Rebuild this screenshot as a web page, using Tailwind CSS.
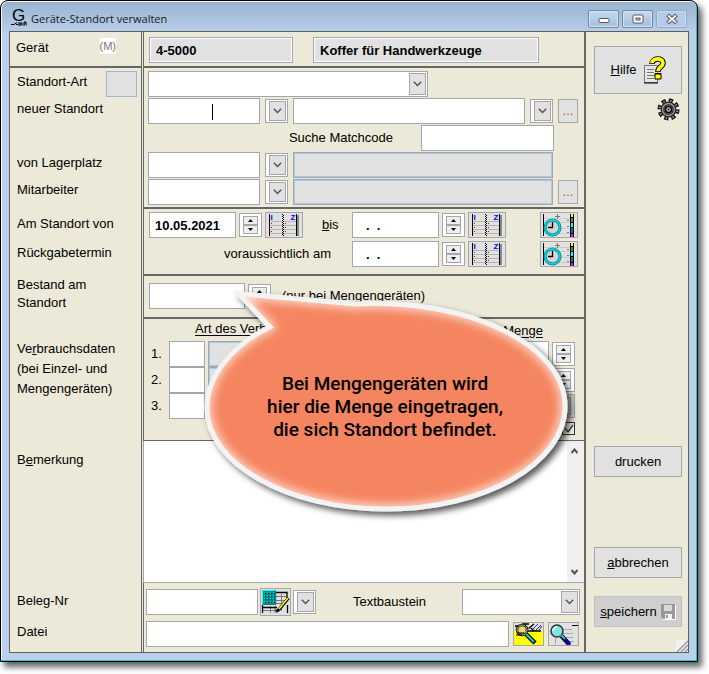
<!DOCTYPE html>
<html lang="de">
<head>
    <meta charset="UTF-8">
    <meta name="viewport" content="width=device-width, initial-scale=1.0">
    <title>Geräte-Standort verwalten</title>
    <script src="https://cdn.jsdelivr.net/npm/@tailwindcss/browser@4"></script>
</head>
<body class="bg-white pr-[11px] pb-3 font-['Liberation_Sans',sans-serif] text-[13px] leading-5 text-black">

    <!-- shared icons -->
    <svg class="hidden" aria-hidden="true">
        <symbol id="chevron" viewBox="0 0 9 6"><path d="M.8.8 4.5 4.5 8.2.8" fill="none" stroke="#555" stroke-width="1.5"/></symbol>
        <symbol id="up" viewBox="0 0 5 3"><path d="M0 3 2.5 0 5 3z"/></symbol>
        <symbol id="down" viewBox="0 0 5 3"><path d="M0 0 2.5 3 5 0z"/></symbol>
        <symbol id="calendar" viewBox="0 0 36 24">
            <path d="M4 8.5h26M4 12.5h26M4 16.5h26M4 20.5h26" stroke="#b4b4b4"/>
            <path d="M3.5 1v22M30.5 1v22" stroke="#000"/>
            <path d="M32 2v21" stroke="#8a8a8a" stroke-width="2"/>
            <path d="M16.5 1v22" stroke="#000" stroke-dasharray="1 1"/>
            <path d="M17.5 2v21" stroke="#000" stroke-dasharray="1 1"/>
            <path d="M5.5 10v1M5.5 14v1M5.5 18v1M19.5 10v1M19.5 14v1M19.5 18v1" stroke="#d00"/>
            <text x="4.500" y="7" font-size="8" font-weight="bold" fill="#00f">I</text>
            <text x="24.500" y="7" font-size="8" font-weight="bold" fill="#00f">Z</text>
        </symbol>
        <symbol id="clock" viewBox="0 0 36 24">
            <path d="M3 5.500h26M3 9.500h26M3 15.500h26M3 20.500h26" stroke="#ccc"/>
            <path d="M2.500 1v22" stroke="#000"/>
            <path d="M16.500 1v5M14 3.500h5M26 7.500h2M26 13.500h2M26 19.500h2" stroke="#777"/>
            <circle cx="11.500" cy="14.500" r="7.500" fill="#d4d4d4" stroke="#087a80" stroke-width="3"/>
            <circle cx="11.500" cy="14.500" r="7.500" fill="none" stroke="#00e5ee" stroke-width="1.400"/>
            <path d="M11.500 9v5.500H7" fill="none" stroke="#000" stroke-width="1.300"/>
            <path d="M29 1h4v23h-4z"/>
            <path d="M30 1h2v3h-2z" fill="#ff0"/><path d="M30 5h2v4h-2z" fill="#808000"/>
            <path d="M30 10h2v4h-2z" fill="#0ff"/><path d="M30 15h2v5h-2z" fill="#008080"/>
            <path d="M30 21h2v3h-2z" fill="#f0f"/>
        </symbol>
    </svg>

    <div class="relative rounded-t-lg border border-black bg-[#b9d1ea] pr-2 pb-2 pl-2 shadow-[inset_-1px_-1px_0_#1fc4e0,inset_1px_1px_0_#f4f8fc,4px_5px_6px_#000000a0]">

        <!-- title bar -->
        <header class="-mx-[7px] mt-px flex h-[29px] items-center rounded-t-md bg-linear-to-b from-[#9ab3d1] to-[#b6cee8] pr-[9px] pl-2">
            <svg class="h-5 w-[18px]" viewBox="0 0 18 20">
                <text x="2" y="14" font-size="17" font-family="Liberation Sans">G</text>
                <path d="M1 17.500h3l3-2M6 17.500h2M9 15v4M11 15v4M9 17h4M14 19v-4h2v2h-2M16 18h1" fill="none" stroke="#000"/>
            </svg>
            <h1 class="flex-1 pt-[5px] pl-[3px] font-['Open_Sans',sans-serif] text-[11px] text-[#1a1a1a]">Geräte-Standort verwalten</h1>
            <div class="mt-1 flex gap-[3px]">
                <button aria-label="Minimieren" class="grid h-[18px] w-[31px] place-items-center rounded-xs border border-[#6d88a6] bg-linear-to-b from-[#c7daee] to-[#a3bfdd] shadow-[inset_0_0_0_1px_#d5e4f3]">
                    <svg class="h-3 w-3" viewBox="0 0 12 12"><rect x="1" y="5.500" width="10" height="4" rx="1" fill="#fff" stroke="#555b66"/></svg>
                </button>
                <button aria-label="Maximieren" class="grid h-[18px] w-[31px] place-items-center rounded-xs border border-[#6d88a6] bg-linear-to-b from-[#c7daee] to-[#a3bfdd] shadow-[inset_0_0_0_1px_#d5e4f3]">
                    <svg class="h-3 w-3" viewBox="0 0 12 12"><rect x="1" y="2" width="10" height="8" rx="1" fill="#fff" stroke="#555b66"/><rect x="4" y="5" width="4" height="2" fill="#b9d1ea" stroke="#555b66"/></svg>
                </button>
                <button aria-label="Schließen" class="grid h-[18px] w-[31px] place-items-center rounded-xs border border-[#93abc6] bg-[#b5cce6] shadow-[inset_0_0_0_1px_#c9dbee]">
                    <svg class="h-3 w-3" viewBox="0 0 12 12"><path d="m1.500 2 9 8M10.500 2l-9 8" stroke="#555b66" stroke-width="4"/><path d="m2 2.500 8 7M10 2.500l-8 7" stroke="#f4f4f4" stroke-width="1.800"/></svg>
                </button>
            </div>
        </header>

        <main class="flex border border-l-0 border-[#5f5f5f] bg-[#ece9d8]">
            <form class="min-w-0 flex-1">

                <section class="flex gap-px">
                    <div class="flex w-[133px] justify-between border-x border-b-2 border-[#666] pt-[6px] pr-[25px] pl-[6px]">
                        <label for="geraet">Gerät</label>
                        <span class="h-4 bg-white text-[11px] leading-4 text-[#777]">(M)</span>
                    </div>
                    <div class="flex flex-1 gap-5 border-b-2 border-l border-[#666] pt-[5px] pr-[45px] pb-[3px] pl-[5px]">
                        <input id="geraet" value="4-5000" readonly class="h-[26px] w-36 border border-[#a5a5ac] bg-[#e1e1e1] px-[6px] font-bold shadow-[inset_0_0_0_1px_#fff] outline-none">
                        <input aria-label="Bezeichnung" value="Koffer für Handwerkzeuge" readonly class="h-[26px] min-w-0 flex-1 border border-[#a5a5ac] bg-[#e1e1e1] px-[6px] font-bold shadow-[inset_0_0_0_1px_#fff] outline-none">
                    </div>
                </section>

                <section class="flex gap-px">
                    <div class="flex w-[133px] flex-col gap-px border-x border-[#666] pt-[3px] pl-[7px] leading-[22px]">
                        <div class="flex h-[26px] justify-between pr-1">
                            <label for="art">Standort-Art</label>
                            <button type="button" aria-label="Standort-Art wählen" class="h-[26px] w-[31px] border border-[#9fb6d3] bg-[#e1e1e1]"></button>
                        </div>
                        <label for="neu" class="h-[53px]">neuer Standort</label>
                        <label for="lager" class="h-[26px]">von Lagerplatz</label>
                        <label for="mitarbeiter" class="h-[26px]">Mitarbeiter</label>
                    </div>
                    <div class="flex flex-1 flex-col gap-px border-b-2 border-l border-[#666] pt-[3px] pr-[6px] pb-[2px] pl-1">
                        <div class="relative w-[280px]">
                            <select id="art" class="block h-[26px] w-full appearance-none border border-[#a5a5ac] bg-white"><option></option></select>
                            <span class="pointer-events-none absolute top-[2px] right-[2px] grid h-[22px] w-[17px] place-items-center border border-[#a5a5ac] bg-[#e1e1e1]"><svg class="h-[6px] w-[9px]"><use href="#chevron"/></svg></span>
                        </div>
                        <div class="flex items-center gap-[5px]">
                            <div class="relative">
                                <input id="neu" class="block h-[26px] w-28 border border-[#a5a5ac] bg-white">
                                <span class="absolute top-[6px] left-16 h-4 w-px bg-black"></span>
                            </div>
                            <div class="h-6 w-[23px] border border-[#a5a5ac] bg-white py-px pl-[3px]">
                                <button type="button" aria-label="Standort auswählen" class="grid h-5 w-[17px] place-items-center border border-[#a5a5ac] bg-[#e1e1e1]"><svg class="h-[6px] w-[9px]"><use href="#chevron"/></svg></button>
                            </div>
                            <input aria-label="Standort" class="h-[26px] min-w-0 flex-1 border border-[#a5a5ac] bg-white">
                            <div class="h-6 w-[23px] border border-[#a5a5ac] bg-white py-px pl-[3px]">
                                <button type="button" aria-label="Standort suchen" class="grid h-5 w-[17px] place-items-center border border-[#a5a5ac] bg-[#e1e1e1]"><svg class="h-[6px] w-[9px]"><use href="#chevron"/></svg></button>
                            </div>
                            <button type="button" class="h-6 w-5 border border-[#a5a5ac] bg-[#e1e1e1] text-[#b05a10]">...</button>
                        </div>
                        <div class="flex items-center justify-end gap-7 pr-6">
                            <label for="matchcode">Suche Matchcode</label>
                            <input id="matchcode" class="h-[26px] w-[133px] border border-[#a5a5ac] bg-white">
                        </div>
                        <div class="flex items-center gap-[5px]">
                            <input id="lager" class="h-[26px] w-28 border border-[#a5a5ac] bg-white">
                            <div class="h-6 w-[23px] border border-[#a5a5ac] bg-white py-px pl-[3px]">
                                <button type="button" aria-label="Lagerplatz auswählen" class="grid h-5 w-[17px] place-items-center border border-[#a5a5ac] bg-[#e1e1e1]"><svg class="h-[6px] w-[9px]"><use href="#chevron"/></svg></button>
                            </div>
                            <input aria-label="Lagerplatz" disabled class="mr-[25px] h-[26px] min-w-0 flex-1 border border-[#a5a5ac] bg-[#e1e1e1] shadow-[inset_0_0_0_1px_#a9c8ea]">
                        </div>
                        <div class="flex items-center gap-[5px]">
                            <input id="mitarbeiter" class="h-[26px] w-28 border border-[#a5a5ac] bg-white">
                            <div class="h-6 w-[23px] border border-[#a5a5ac] bg-white py-px pl-[3px]">
                                <button type="button" aria-label="Mitarbeiter auswählen" class="grid h-5 w-[17px] place-items-center border border-[#a5a5ac] bg-[#e1e1e1]"><svg class="h-[6px] w-[9px]"><use href="#chevron"/></svg></button>
                            </div>
                            <input aria-label="Mitarbeitername" disabled class="h-[26px] min-w-0 flex-1 border border-[#a5a5ac] bg-[#e1e1e1] shadow-[inset_0_0_0_1px_#a9c8ea]">
                            <button type="button" class="h-6 w-5 border border-[#a5a5ac] bg-[#e1e1e1] text-[#b05a10]">...</button>
                        </div>
                    </div>
                </section>

                <section class="flex gap-px">
                    <div class="flex w-[133px] flex-col gap-[3px] border-x border-[#666] pt-[2px] pl-[7px] leading-[26px]">
                        <label for="von">Am Standort von</label>
                        <label for="termin">Rückgabetermin</label>
                    </div>
                    <div class="flex flex-1 flex-col gap-[3px] border-b-2 border-l border-[#666] pt-[3px] pr-[6px] pb-[7px] pl-[5px]">
                        <div class="flex items-center gap-[3px]">
                            <input id="von" value="10.05.2021" class="h-[26px] w-[87px] border border-[#a5a5ac] bg-white px-[5px] font-bold">
                            <div class="flex h-6 w-[23px] flex-col items-center justify-center border border-[#a5a5ac] bg-white">
                                <button type="button" aria-label="Später" class="grid h-[9px] w-[15px] place-items-center border border-[#a5a5ac] bg-[#eee]"><svg class="h-[3px] w-[5px]"><use href="#up"/></svg></button>
                                <button type="button" aria-label="Früher" class="grid h-[9px] w-[15px] place-items-center border border-[#a5a5ac] bg-[#eee]"><svg class="h-[3px] w-[5px]"><use href="#down"/></svg></button>
                            </div>
                            <button type="button" aria-label="Kalender" class="h-[26px] w-[38px] border border-[#a5a5ac] bg-[#e1e1e1]"><svg class="h-6 w-9"><use href="#calendar"/></svg></button>
                            <label for="bis" class="w-[43px] pl-4"><u>b</u>is</label>
                            <input id="bis" value=".&nbsp;&nbsp;." class="h-[26px] w-[87px] border border-[#a5a5ac] bg-white px-[13px] font-bold">
                            <div class="flex h-6 w-[23px] flex-col items-center justify-center border border-[#a5a5ac] bg-white">
                                <button type="button" aria-label="Später" class="grid h-[9px] w-[15px] place-items-center border border-[#a5a5ac] bg-[#eee]"><svg class="h-[3px] w-[5px]"><use href="#up"/></svg></button>
                                <button type="button" aria-label="Früher" class="grid h-[9px] w-[15px] place-items-center border border-[#a5a5ac] bg-[#eee]"><svg class="h-[3px] w-[5px]"><use href="#down"/></svg></button>
                            </div>
                            <button type="button" aria-label="Kalender" class="h-[26px] w-[38px] border border-[#a5a5ac] bg-[#e1e1e1]"><svg class="h-6 w-9"><use href="#calendar"/></svg></button>
                            <button type="button" aria-label="Terminplan" class="ml-auto h-[26px] w-[38px] border border-[#a5a5ac] bg-[#e1e1e1]"><svg class="h-6 w-9"><use href="#clock"/></svg></button>
                        </div>
                        <div class="flex items-center gap-[3px]">
                            <label for="termin" class="w-[200px] pr-[18px] text-right">voraussichtlich am</label>
                            <input id="termin" value=".&nbsp;&nbsp;." class="h-[26px] w-[87px] border border-[#a5a5ac] bg-white px-[13px] font-bold">
                            <div class="flex h-6 w-[23px] flex-col items-center justify-center border border-[#a5a5ac] bg-white">
                                <button type="button" aria-label="Später" class="grid h-[9px] w-[15px] place-items-center border border-[#a5a5ac] bg-[#eee]"><svg class="h-[3px] w-[5px]"><use href="#up"/></svg></button>
                                <button type="button" aria-label="Früher" class="grid h-[9px] w-[15px] place-items-center border border-[#a5a5ac] bg-[#eee]"><svg class="h-[3px] w-[5px]"><use href="#down"/></svg></button>
                            </div>
                            <button type="button" aria-label="Kalender" class="h-[26px] w-[38px] border border-[#a5a5ac] bg-[#e1e1e1]"><svg class="h-6 w-9"><use href="#calendar"/></svg></button>
                            <button type="button" aria-label="Terminplan" class="ml-auto h-[26px] w-[38px] border border-[#a5a5ac] bg-[#e1e1e1]"><svg class="h-6 w-9"><use href="#clock"/></svg></button>
                        </div>
                    </div>
                </section>

                <section class="flex gap-px">
                    <div class="w-[133px] border-x border-[#666] pl-[7px] leading-[18px]">
                        <label for="bestand">Bestand am<br>Standort</label>
                    </div>
                    <div class="flex flex-1 items-center gap-[3px] border-b-2 border-l border-[#666] pt-[7px] pb-2 pl-[5px]">
                        <input id="bestand" class="h-[26px] w-24 border border-[#a5a5ac] bg-white">
                        <div class="flex h-6 w-[23px] flex-col items-center justify-center border border-[#a5a5ac] bg-white">
                            <button type="button" aria-label="Mehr" class="grid h-[9px] w-[15px] place-items-center border border-[#a5a5ac] bg-[#eee]"><svg class="h-[3px] w-[5px]"><use href="#up"/></svg></button>
                            <button type="button" aria-label="Weniger" class="grid h-[9px] w-[15px] place-items-center border border-[#a5a5ac] bg-[#eee]"><svg class="h-[3px] w-[5px]"><use href="#down"/></svg></button>
                        </div>
                        <span class="pl-2">(nur bei Mengengeräten)</span>
                    </div>
                </section>

                <section class="flex gap-px">
                    <div class="w-[133px] border-x border-[#666] pt-5 pl-[7px]">
                        <label for="verbrauch1">Ve<u>r</u>brauchsdaten<br>(bei Einzel- und<br>Mengengeräten)</label>
                    </div>
                    <div class="flex-1 border-b border-l border-[#666] pr-[9px] pb-[5px] pl-[7px]">
                        <div class="flex h-[22px] justify-between pr-8 pl-11 underline underline-offset-2">
                            <span>Art des Verbrauchs</span>
                            <span class="pt-[2px]">Menge</span>
                        </div>
                        <div class="flex items-center gap-[3px]">
                            <span class="w-[15px]">1.</span>
                            <input id="verbrauch1" class="h-[26px] w-9 border border-[#a5a5ac] bg-white">
                            <input aria-label="Art 1" disabled class="h-[26px] min-w-0 flex-1 border border-[#a5a5ac] bg-[#e1e1e1] shadow-[inset_0_0_0_1px_#a9c8ea]">
                            <input aria-label="Menge 1" class="h-[26px] w-20 border border-[#a5a5ac] bg-white">
                            <div class="flex h-6 w-[23px] flex-col items-center justify-center border border-[#a5a5ac] bg-white">
                                <button type="button" aria-label="Mehr" class="grid h-[9px] w-[15px] place-items-center border border-[#a5a5ac] bg-[#eee]"><svg class="h-[3px] w-[5px]"><use href="#up"/></svg></button>
                                <button type="button" aria-label="Weniger" class="grid h-[9px] w-[15px] place-items-center border border-[#a5a5ac] bg-[#eee]"><svg class="h-[3px] w-[5px]"><use href="#down"/></svg></button>
                            </div>
                        </div>
                        <div class="flex items-center gap-[3px]">
                            <span class="w-[15px]">2.</span>
                            <input aria-label="Verbrauch 2" class="h-[26px] w-9 border border-[#a5a5ac] bg-white">
                            <input aria-label="Art 2" disabled class="h-[26px] min-w-0 flex-1 border border-[#a5a5ac] bg-[#e1e1e1] shadow-[inset_0_0_0_1px_#a9c8ea]">
                            <input aria-label="Menge 2" class="h-[26px] w-20 border border-[#a5a5ac] bg-white">
                            <div class="flex h-6 w-[23px] flex-col items-center justify-center border border-[#a5a5ac] bg-white">
                                <button type="button" aria-label="Mehr" class="grid h-[9px] w-[15px] place-items-center border border-[#a5a5ac] bg-[#eee]"><svg class="h-[3px] w-[5px]"><use href="#up"/></svg></button>
                                <button type="button" aria-label="Weniger" class="grid h-[9px] w-[15px] place-items-center border border-[#a5a5ac] bg-[#eee]"><svg class="h-[3px] w-[5px]"><use href="#down"/></svg></button>
                            </div>
                        </div>
                        <div class="flex items-center gap-[3px]">
                            <span class="w-[15px]">3.</span>
                            <input aria-label="Verbrauch 3" class="h-[26px] w-9 border border-[#a5a5ac] bg-white">
                            <input aria-label="Art 3" disabled class="h-[26px] min-w-0 flex-1 border border-[#a5a5ac] bg-[#e1e1e1] shadow-[inset_0_0_0_1px_#a9c8ea]">
                            <input aria-label="Menge 3" class="h-[26px] w-20 border border-[#a5a5ac] bg-white">
                            <div class="flex h-6 w-[23px] items-center justify-center border border-[#a5a5ac] bg-[#d0d0d0]">
                                <button type="button" aria-label="Auswahl" class="h-[18px] w-[15px] border border-[#999] bg-[#c4c4c4]"></button>
                            </div>
                        </div>
                        <div class="relative mt-[3px] ml-auto h-[13px] w-[13px]">
                            <input type="checkbox" checked aria-label="Verbrauch buchen" class="block h-[13px] w-[13px] appearance-none border border-[#333] bg-[#f4f4ee]">
                            <svg class="pointer-events-none absolute top-0 left-0 h-[13px] w-[13px]" viewBox="0 0 13 13"><path d="m3 6 3 4 5-7" fill="none" stroke="#333" stroke-width="1.300"/></svg>
                        </div>
                    </div>
                </section>

                <section class="flex gap-px">
                    <div class="w-[133px] border-x border-[#666] pt-[9px] pl-[7px]">
                        <label for="bemerkung">B<u>e</u>merkung</label>
                    </div>
                    <div class="flex flex-1 border-b border-l border-[#a5a5ac] bg-white">
                        <textarea id="bemerkung" class="block h-[141px] min-w-0 flex-1 resize-none overflow-hidden p-1"></textarea>
                        <div class="flex w-[17px] flex-col justify-between bg-[#f0f0f0] py-[7px] pl-1">
                            <button type="button" aria-label="Nach oben" class="block"><svg class="h-[6px] w-[7px]" viewBox="0 0 7 6"><path d="M.5 5 3.500 1.500 6.500 5" fill="none" stroke="#505050" stroke-width="2"/></svg></button>
                            <button type="button" aria-label="Nach unten" class="block"><svg class="h-[6px] w-[7px]" viewBox="0 0 7 6"><path d="M.5 1 3.500 4.500 6.500 1" fill="none" stroke="#505050" stroke-width="2"/></svg></button>
                        </div>
                    </div>
                </section>

                <section class="flex gap-px">
                    <div class="flex w-[133px] flex-col gap-[6px] border-x border-[#666] pt-[5px] pl-[7px] leading-[25px]">
                        <label for="beleg">Beleg-Nr</label>
                        <label for="datei">Datei</label>
                    </div>
                    <div class="flex flex-1 flex-col gap-[5px] border-l border-[#666] pt-[5px] pr-1 pb-[5px] pl-[2px]">
                        <div class="flex items-center gap-[2px]">
                            <input id="beleg" class="h-[26px] w-[112px] border border-[#a5a5ac] bg-white">
                            <button type="button" aria-label="Beleg bearbeiten" class="h-7 w-[31px] border border-[#a5a5ac] bg-[#e1e1e1]">
                                <svg class="h-[26px] w-[29px]" viewBox="0 0 29 26">
                                    <path d="M15 7.500h10M15 11.500h10M15 14.500h8M2 21.500h12M9.500 17v7M14 17v7M20.500 5v17" stroke="#777"/>
                                    <path d="M15 3.500h11V12M1.500 16v8M14.500 4v12M26.500 16v8M1 18.500h15" fill="none" stroke="#000" stroke-width="1.300"/>
                                    <path d="M1 1h14v15H1z" fill="#008a8c"/>
                                    <path d="M3 4.500h11M3 7.500h11M3 10.500h11M3 13.500h11" stroke="#033" stroke-dasharray="2 1"/>
                                    <path d="M3 4h11M3 7h11M3 10h11M3 13h11" stroke="#5fe" stroke-dasharray="1 2"/>
                                    <path d="M1.500 16V1.500H14" fill="none" stroke="#0ff"/>
                                    <path d="M27.500 9 18 20.500l-3 2" fill="none" stroke="#000" stroke-width="3"/>
                                    <path d="m27 9-9 11" stroke="#ff0" stroke-width="1.500"/>
                                </svg>
                            </button>
                            <div class="h-6 w-[23px] border border-[#a5a5ac] bg-white py-px pl-[3px]">
                                <button type="button" aria-label="Beleg auswählen" class="grid h-5 w-[17px] place-items-center border border-[#a5a5ac] bg-[#e1e1e1]"><svg class="h-[6px] w-[9px]"><use href="#chevron"/></svg></button>
                            </div>
                            <label for="baustein" class="flex-1 pl-[35px]">Textbaustein</label>
                            <div class="relative w-[118px]">
                                <select id="baustein" class="block h-[26px] w-full appearance-none border border-[#a5a5ac] bg-white"><option></option></select>
                                <span class="pointer-events-none absolute top-[2px] right-[2px] grid h-[22px] w-[17px] place-items-center border border-[#a5a5ac] bg-[#e1e1e1]"><svg class="h-[6px] w-[9px]"><use href="#chevron"/></svg></span>
                            </div>
                        </div>
                        <div class="flex items-center gap-1">
                            <input id="datei" class="h-[26px] min-w-0 flex-1 border border-[#a5a5ac] bg-white">
                            <button type="button" aria-label="Datei suchen" class="h-6 w-[31px] border border-[#a5a5ac] bg-[#ff0]">
                                <svg class="h-[22px] w-[29px]" viewBox="0 0 29 22">
                                    <path d="M0 0h29v8H0z" fill="#e4e4d0"/>
                                    <path d="M1 3h5l3-2h6M10 8h17M15 5l5-4M20 8l-3-3" fill="none" stroke="#000" stroke-width="1.300"/>
                                    <path d="m19 6 5-5M22 7l5-5M25 7l3-4M13 5h4" stroke="#22c"/>
                                    <circle cx="8" cy="7" r="5" fill="#e8dd60" stroke="#000" stroke-width="2.500"/>
                                    <circle cx="8" cy="7" r="5" fill="none" stroke="#bbb"/>
                                    <path d="M3 10h7M2 12h6" stroke="#000"/>
                                    <path d="m12 11 9 9" stroke="#000" stroke-width="4.500"/>
                                    <path d="m12 11 8 8" stroke="#2cc" stroke-width="2"/>
                                </svg>
                            </button>
                            <button type="button" aria-label="Datei ansehen" class="mr-px h-6 w-[31px] border border-[#a5a5ac] bg-[#e1e1e1]">
                                <svg class="h-[22px] w-[29px]" viewBox="0 0 29 22">
                                    <path d="M13 6.500h10M14 10.500h10M16 14.500h8M20 18.500h5M6.500 14v7" stroke="#aaa"/>
                                    <path d="M23 2.500h6" stroke="#000"/>
                                    <circle cx="8" cy="8" r="6" fill="#7fe3e6" stroke="#333" stroke-width="1.500"/>
                                    <path d="M4 8a4 4 0 0 1 4-4" fill="none" stroke="#fff" stroke-width="1.500"/>
                                    <path d="m12.500 13 8 8.500" stroke="#000" stroke-width="4.500"/>
                                    <path d="m12 12 5 5" stroke="#19c8d0" stroke-width="2"/>
                                    <path d="m16 16 5 6" stroke="#00c" stroke-width="2.500"/>
                                </svg>
                            </button>
                        </div>
                    </div>
                </section>
            </form>

            <!-- action column -->
            <aside class="relative flex w-[104px] flex-col border-l-2 border-[#666] pt-[14px] pr-[6px] pb-[25px] pl-2">
                <button class="flex h-12 items-center justify-center gap-[6px] border border-[#a5a5ac] bg-[#e1e1e1]">
                    <span><u>H</u>ilfe</span>
                    <svg class="h-7 w-[23px]" viewBox="0 0 23 28">
                        <path d="M1.500 9.500h13v17h-13z" fill="#e6e6e6" stroke="#777"/>
                        <path d="M1 27h14" stroke="#000"/>
                        <path d="M4 13.500h7M4 16.500h7M4 19.500h8M4 22.500h7" stroke="#777"/>
                        <path d="M9 8C9 1.500 20 1.500 20 7c0 4-5 4-5 8v1" fill="none" stroke="#000" stroke-width="5.500"/>
                        <path d="M12 17.500h6v5.500h-6z" stroke="#000"/>
                        <path d="M9 7.300C9 1.500 20 1.500 20 7c0 4-5 4-5 8v.3" fill="none" stroke="#ff0" stroke-width="3.700"/>
                        <path d="M12.500 18.500h5v4h-5z" fill="#ff0"/>
                    </svg>
                </button>
                <button aria-label="Einstellungen" class="mt-1 mr-[2px] ml-auto h-[23px] w-[23px]">
                    <svg viewBox="0 0 23 23">
                        <circle cx="11.500" cy="11.500" r="9" fill="none" stroke="#000" stroke-width="4" stroke-dasharray="4.070 3"/>
                        <circle cx="11.500" cy="11.500" r="8.500" fill="none" stroke="#999" stroke-width="3" stroke-dasharray="1.500 5.175" stroke-dashoffset="-1.200"/>
                        <circle cx="11.500" cy="11.500" r="6" fill="#aaa" stroke="#222" stroke-width="4"/>
                        <circle cx="11.500" cy="11.500" r="6" fill="none" stroke="#999" stroke-width="1.500"/>
                        <circle cx="11.500" cy="11.500" r="3" fill="#ccc" stroke="#000" stroke-width="1.500"/>
                        <circle cx="11.500" cy="11.500" r="1"/>
                    </svg>
                </button>
                <button class="mt-auto mb-[70px] h-[31px] border border-[#a5a5ac] bg-[#e1e1e1]">drucken</button>
                <button class="mb-[18px] h-[31px] border border-[#a5a5ac] bg-[#e1e1e1]"><u>a</u>bbrechen</button>
                <button class="flex h-[31px] items-center justify-center gap-1 border border-[#bfbfbf] bg-[#cfcfcf]">
                    <span><u>s</u>peichern</span>
                    <svg class="h-4 w-[15px]" viewBox="0 0 15 16">
                        <path d="M0 0h14v15H2l-2-2z" fill="#999"/>
                        <path d="M3 1h8v6H3z" fill="#d8d8d8"/><path d="M4 10h7v5H4z" fill="#f4f4f4"/><path d="M5 11h2v3H5z" fill="#999"/>
                        <path d="M14.500 1v14.500H2" fill="none" stroke="#fff"/>
                    </svg>
                </button>
                <svg class="absolute right-0 bottom-0 h-3 w-3" viewBox="0 0 12 12">
                    <path d="M0 0h12v12H0z" fill="#f2f2f2"/>
                    <path d="M1 12 12 1M5 12l7-7M9 12l3-3" stroke="#999" stroke-width="1.500"/>
                </svg>
            </aside>
        </main>

        <!-- speech bubble over the form -->
        <div class="absolute top-[283px] left-[193px] h-[240px] w-[390px]">
            <svg class="absolute inset-0 h-full w-full" viewBox="0 0 390 240">
                <defs>
                    <path id="bubble" d="M45 10 C85 13 125 17 160 20 C275 14 371 61 371 122 C371 180 290 225 192 225 C94 225 13 180 13 124 C13 92 38 61 76 43 Z"/>
                    <clipPath id="inside"><use href="#bubble"/></clipPath>
                    <filter id="soft" x="-10%" y="-10%" width="120%" height="120%"><feGaussianBlur stdDeviation="5"/></filter>
                    <filter id="shade" x="-10%" y="-10%" width="120%" height="120%"><feDropShadow dx="4" dy="4" stdDeviation="3" flood-opacity=".65"/></filter>
                </defs>
                <use href="#bubble" fill="#f58560" stroke="#f3f3f3" stroke-width="5" filter="url(#shade)"/>
                <g clip-path="url(#inside)"><use href="#bubble" fill="none" stroke="#fde3d8" stroke-width="9" filter="url(#soft)"/></g>
                <use href="#bubble" fill="none" stroke="#f3f3f3" stroke-width="4"/>
            </svg>
            <p class="relative pt-[88px] pr-2 text-center font-['Roboto',sans-serif] text-[19px] leading-[23px] font-medium">Bei Mengengeräten wird<br>hier die Menge eingetragen,<br>die sich Standort befindet.</p>
        </div>
    </div>
</body>
</html>
